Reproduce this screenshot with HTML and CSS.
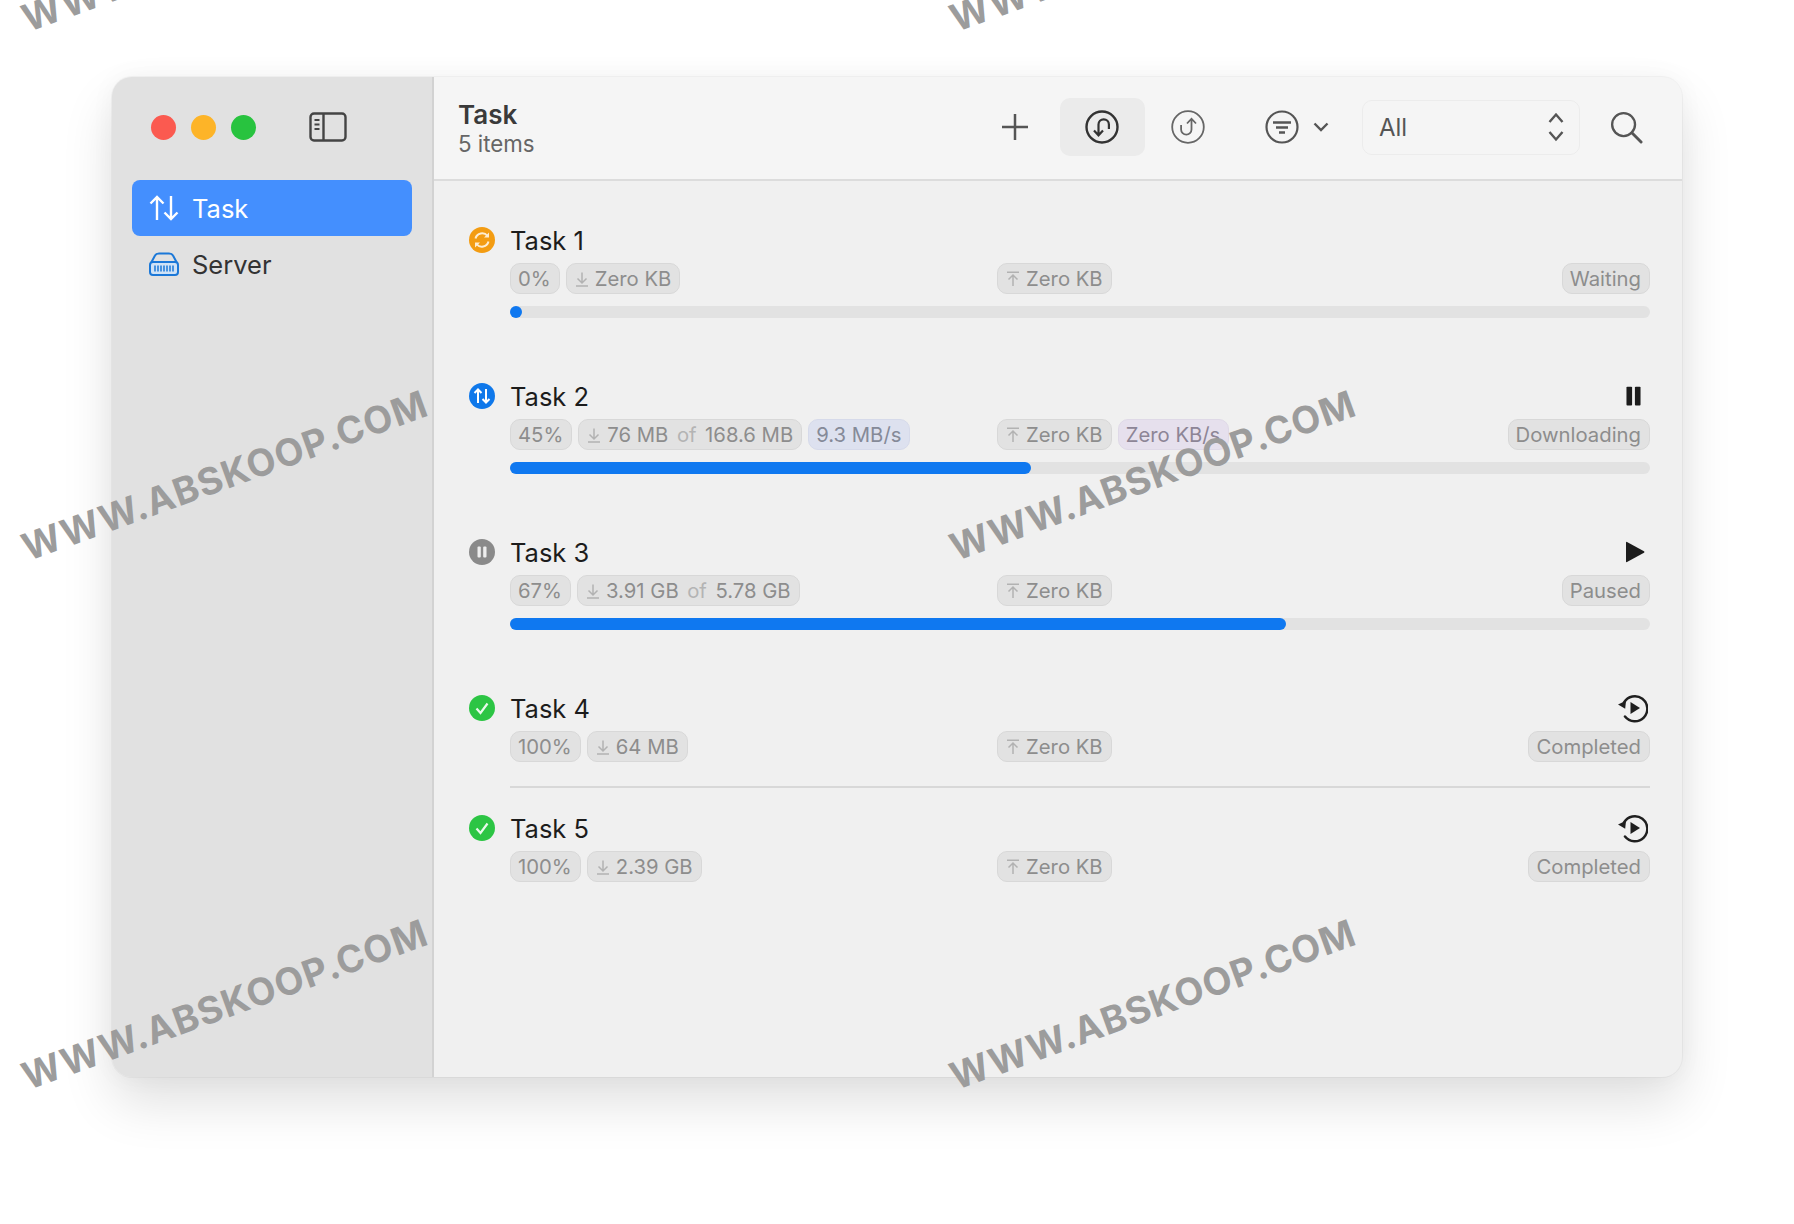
FILE: index.html
```html
<!DOCTYPE html>
<html lang="en">
<head>
<meta charset="utf-8">
<title>Task</title>
<link rel="stylesheet" href="styles.css">
</head>
<body>
<svg class="defs" width="0" height="0" aria-hidden="true">
  <symbol id="dl" viewBox="0 0 14 16"><path d="M7 1.500V12M2.500 7.500 7 12l4.500-4.500M1 15h12" fill="none" stroke="currentColor" stroke-width="1.500"/></symbol>
  <symbol id="ul" viewBox="0 0 14 16"><path d="M7 15V4.500M2.500 8.500 7 4l4.500 4.500M1 1.200h12" fill="none" stroke="currentColor" stroke-width="1.500"/></symbol>
  <symbol id="check" viewBox="0 0 26 26"><circle cx="13" cy="13" r="13" fill="#2cc544"/><path d="M7.500 13.500l4 4.500 7-9.500" fill="none" stroke="#e9f9ec" stroke-width="2.200"/></symbol>
  <symbol id="replay" viewBox="0 0 30 30"><path d="M6 9.500A12.500 12.500 0 1 1 7 23.500" fill="none" stroke="#1f1f1f" stroke-width="2.500" stroke-linecap="round"/><path d="M0 11.500l8-3.800-.8 8z" fill="#1f1f1f"/><path d="M12.500 9l9.500 6-9.500 6z" fill="#1f1f1f"/></symbol>
</svg>
<main class="page">
  <div class="window">
    <aside class="sidebar">
      <div class="titlebar">
        <span class="light red"></span><span class="light yellow"></span><span class="light green"></span>
        <svg class="toggle" viewBox="0 0 38 30"><rect x="1.500" y="1.500" width="35" height="27" rx="3.500" fill="none" stroke="#444" stroke-width="2.400"/><path d="M14.500 2v26" stroke="#444" stroke-width="2.400"/><path d="M5.500 8h5M5.500 12.500h5M5.500 17h5" stroke="#444" stroke-width="2"/></svg>
      </div>
      <nav class="nav">
        <div class="nav-item active">
          <svg class="nav-icon" viewBox="0 0 30 26"><path d="M8 25V2M1.500 8.500 8 2l6.500 6.500M22 1v23M15.500 17.500 22 24l6.500-6.500" fill="none" stroke="#fff" stroke-width="2.400"/></svg>
          <span>Task</span>
        </div>
        <div class="nav-item">
          <svg class="nav-icon" viewBox="0 0 30 24"><path d="M2 11 6 3.500Q7 1.500 10 1.500h10q3 0 4 2l4 7.500" fill="none" stroke="#1b78d8" stroke-width="2"/><rect x="1" y="10" width="28" height="13" rx="3" fill="#cfe2f6" stroke="#1b78d8" stroke-width="2"/><path d="M6 13.500v6M9 13.500v6M12 13.500v6M15 13.500v6M18 13.500v6M21 13.500v6M24 13.500v6" stroke="#1b78d8" stroke-width="1.500"/></svg>
          <span>Server</span>
        </div>
      </nav>
    </aside>
    <section class="main">
      <header class="toolbar">
        <div class="heading">
          <div class="heading-title">Task</div>
          <div class="heading-sub">5 items</div>
        </div>
        <div class="tool">
          <svg class="ic-plus" viewBox="0 0 28 28"><path d="M14 1v26M1 14h26" stroke="#555" stroke-width="2.500"/></svg>
        </div>
        <div class="tool tool-on">
          <svg class="ic-circle ic-on" viewBox="0 0 34 34"><circle cx="17" cy="17" r="15.500" fill="none" stroke="#333" stroke-width="2.400"/><path d="M13.500 25V14.500a5.200 5.200 0 0 1 10.400 0V19M9 20.500l4.500 4.800 4.500-4.800" fill="none" stroke="#333" stroke-width="2.200"/></svg>
        </div>
        <div class="tool">
          <svg class="ic-circle" viewBox="0 0 34 34"><circle cx="17" cy="17" r="15.800" fill="none" stroke="#666" stroke-width="1.800"/><path d="M20.500 9v10.500a5.200 5.200 0 0 1-10.400 0V15M16 13.500 20.500 8.700 25 13.500" fill="none" stroke="#666" stroke-width="1.800"/></svg>
        </div>
        <div class="filter">
          <svg class="ic-circle" viewBox="0 0 34 34"><circle cx="17" cy="17" r="15.500" fill="none" stroke="#555" stroke-width="2.200"/><path d="M8 12.500h18M11 17.500h12M14 22.500h6" stroke="#555" stroke-width="2.400"/></svg>
          <svg class="ic-chev" viewBox="0 0 16 10"><path d="M1.500 1.500 8 8l6.500-6.500" fill="none" stroke="#555" stroke-width="2.400"/></svg>
        </div>
        <div class="select">
          <span>All</span>
          <svg class="ic-updown" viewBox="0 0 18 30"><path d="M2.500 10 9 2.500l6.500 7.500M2.500 20 9 27.500l6.500-7.500" fill="none" stroke="#555" stroke-width="2.400"/></svg>
        </div>
        <div class="search">
          <svg class="ic-search" viewBox="0 0 34 34"><circle cx="14" cy="14" r="11.800" fill="none" stroke="#555" stroke-width="2.400"/><path d="M22.500 22.500 32 32" stroke="#555" stroke-width="3" stroke-linecap="round"/></svg>
        </div>
      </header>
      <div class="list">

        <article class="task">
          <svg class="status" viewBox="0 0 26 26"><circle cx="13" cy="13" r="13" fill="#f39c12"/><path d="M6.500 11.500A6.800 6.800 0 0 1 18.500 9M19.500 14.500A6.800 6.800 0 0 1 7.500 17" fill="none" stroke="#fdecd0" stroke-width="2"/><path d="M20 5.500v5h-5zM6 20.500v-5h5z" fill="#fdecd0"/></svg>
          <div class="body">
            <div class="name-line"><span class="name">Task 1</span></div>
            <div class="chips">
              <div class="left">
                <span class="chip">0%</span>
                <span class="chip"><svg class="arr"><use href="#dl"/></svg>Zero KB</span>
              </div>
              <div class="mid">
                <span class="chip"><svg class="arr"><use href="#ul"/></svg>Zero KB</span>
              </div>
              <span class="chip">Waiting</span>
            </div>
            <div class="bar"><div class="fill" style="width:12px"></div></div>
          </div>
        </article>

        <article class="task">
          <svg class="status" viewBox="0 0 26 26"><circle cx="13" cy="13" r="13" fill="#0f78ea"/><path d="M9 20V6.500M5.500 10 9 6.500l3.500 3.500M17 6v13.500M13.500 16l3.500 3.500 3.500-3.500" fill="none" stroke="#fff" stroke-width="2"/></svg>
          <div class="body">
            <div class="name-line">
              <span class="name">Task 2</span>
              <svg class="act act-pause" viewBox="0 0 16 20"><rect x="0.500" y="0" width="6" height="20" rx="1" fill="#1c1c1c"/><rect x="9.500" y="0" width="6" height="20" rx="1" fill="#1c1c1c"/></svg>
            </div>
            <div class="chips">
              <div class="left">
                <span class="chip">45%</span>
                <span class="chip"><svg class="arr"><use href="#dl"/></svg>76 MB<em>of</em>168.6 MB</span>
                <span class="chip chip-down">9.3 MB/s</span>
              </div>
              <div class="mid">
                <span class="chip"><svg class="arr"><use href="#ul"/></svg>Zero KB</span>
                <span class="chip chip-up">Zero KB/s</span>
              </div>
              <span class="chip">Downloading</span>
            </div>
            <div class="bar"><div class="fill" style="width:521px"></div></div>
          </div>
        </article>

        <article class="task">
          <svg class="status" viewBox="0 0 26 26"><circle cx="13" cy="13" r="13" fill="#8a8a8a"/><rect x="8.500" y="7.500" width="3.300" height="11" rx="1" fill="#eee"/><rect x="14.200" y="7.500" width="3.300" height="11" rx="1" fill="#eee"/></svg>
          <div class="body">
            <div class="name-line">
              <span class="name">Task 3</span>
              <svg class="act act-play" viewBox="0 0 20 22"><path d="M1 1.500v19q0 1 1 .5l17-9.300q1-.7 0-1.400L2 1q-1-.5-1 .5z" fill="#1c1c1c"/></svg>
            </div>
            <div class="chips">
              <div class="left">
                <span class="chip">67%</span>
                <span class="chip"><svg class="arr"><use href="#dl"/></svg>3.91 GB<em>of</em>5.78 GB</span>
              </div>
              <div class="mid">
                <span class="chip"><svg class="arr"><use href="#ul"/></svg>Zero KB</span>
              </div>
              <span class="chip">Paused</span>
            </div>
            <div class="bar"><div class="fill" style="width:776px"></div></div>
          </div>
        </article>

        <article class="task task-done">
          <svg class="status"><use href="#check"/></svg>
          <div class="body">
            <div class="name-line">
              <span class="name">Task 4</span>
              <svg class="act act-replay"><use href="#replay"/></svg>
            </div>
            <div class="chips">
              <div class="left">
                <span class="chip">100%</span>
                <span class="chip"><svg class="arr"><use href="#dl"/></svg>64 MB</span>
              </div>
              <div class="mid">
                <span class="chip"><svg class="arr"><use href="#ul"/></svg>Zero KB</span>
              </div>
              <span class="chip">Completed</span>
            </div>
          </div>
        </article>

        <div class="sep"></div>

        <article class="task task-done">
          <svg class="status"><use href="#check"/></svg>
          <div class="body">
            <div class="name-line">
              <span class="name">Task 5</span>
              <svg class="act act-replay"><use href="#replay"/></svg>
            </div>
            <div class="chips">
              <div class="left">
                <span class="chip">100%</span>
                <span class="chip"><svg class="arr"><use href="#dl"/></svg>2.39 GB</span>
              </div>
              <div class="mid">
                <span class="chip"><svg class="arr"><use href="#ul"/></svg>Zero KB</span>
              </div>
              <span class="chip">Completed</span>
            </div>
          </div>
        </article>
      </div>
    </section>
  </div>
</main>
<div class="wm wm-a1">WWW.ABSKOOP.COM</div>
<div class="wm wm-b1">WWW.ABSKOOP.COM</div>
<div class="wm wm-a2">WWW.ABSKOOP.COM</div>
<div class="wm wm-b2">WWW.ABSKOOP.COM</div>
<div class="wm wm-a3">WWW.ABSKOOP.COM</div>
<div class="wm wm-b3">WWW.ABSKOOP.COM</div>
</body>
</html>
```

FILE: styles.css
```css
* { box-sizing: border-box; }
html, body { margin: 0; padding: 0; height: 100%; background: #fff; overflow: hidden; }
body { font-family: Inter, "Liberation Sans", sans-serif; position: relative; }
.defs { position: absolute; }

.page { padding: 77px 0 0 112px; }
.window {
  display: flex;
  width: 1570px;
  height: 1000px;
  border-radius: 20px;
  overflow: hidden;
  background: #f0f0f0;
  box-shadow: 0 26px 52px rgba(0,0,0,.12), 0 0 26px rgba(0,0,0,.04), 0 0 0 1px rgba(0,0,0,.035);
}

.sidebar {
  width: 322px;
  flex: none;
  background: #e1e1e1;
  border-right: 2px solid #d2d2d2;
  padding: 0 20px;
}
.titlebar { display: flex; align-items: center; height: 100px; padding: 0 0 0 19px; }
.light { width: 25px; height: 25px; border-radius: 50%; margin-right: 15px; }
.red { background: #fb5a50; }
.yellow { background: #fdb428; }
.green { background: #28c33f; }
.toggle { width: 40px; height: 30px; margin-left: 37px; }

.nav { margin-top: 3px; }
.nav-item {
  display: flex;
  align-items: center;
  gap: 13px;
  height: 56px;
  padding: 0 0 0 17px;
  border-radius: 8px;
  font-size: 25.500px;
  color: #333;
}
.nav-item.active { background: #448ffe; color: #fff; }
.nav-icon { width: 30px; height: 26px; flex: none; }

.main { flex: 1; min-width: 0; display: flex; flex-direction: column; }

.toolbar {
  display: flex;
  align-items: center;
  height: 104px;
  padding: 0 32px 2px 24px;
  background: #f5f5f5;
  border-bottom: 2px solid #dcdcdc;
}
.heading { flex: 1; margin-top: 3px; }
.heading-title { font-size: 26px; font-weight: 600; color: #3a3a3a; line-height: 31px; }
.heading-sub { font-size: 22.300px; color: #666; line-height: 28px; }

.tool {
  width: 85px;
  height: 58px;
  display: flex;
  align-items: center;
  justify-content: center;
  border-radius: 10px;
}
.tool-on { background: #ebebeb; }
.ic-plus { width: 28px; height: 28px; margin-right: 6px; }
.ic-circle { width: 34px; height: 34px; flex: none; }
.ic-on { margin-right: 2px; }
.filter { display: flex; align-items: center; gap: 14px; margin: 0 28px 0 35px; width: 69px; }
.ic-chev { width: 16px; height: 10px; flex: none; }

.select {
  display: flex;
  align-items: center;
  justify-content: space-between;
  width: 218px;
  height: 55px;
  padding: 0 14px 0 16px;
  border: 1.500px solid #ececec;
  border-radius: 10px;
  font-size: 24px;
  color: #555;
}
.ic-updown { width: 18px; height: 30px; }
.search { width: 46px; margin-left: 24px; display: flex; justify-content: center; padding-right: 2px; }
.ic-search { width: 33px; height: 33px; }

.list { padding: 44px 32px 0 35px; }
.task { display: flex; gap: 15px; margin-bottom: 63px; }
.task-done { margin-bottom: 0; }
.status { width: 26px; height: 26px; flex: none; margin-top: 2px; }
.body { flex: 1; min-width: 0; }
.name-line { display: flex; align-items: center; justify-content: space-between; height: 30px; margin-bottom: 8px; }
.name { font-size: 25.500px; color: #1c1c1c; }
.act { flex: none; }
.act-pause { width: 15px; height: 20px; margin-right: 9px; }
.act-play { width: 20px; height: 22px; margin-right: 5px; }
.act-replay { width: 30px; height: 30px; margin-right: 2px; }

.chips { display: flex; align-items: center; height: 31px; }
.left { display: flex; gap: 6px; width: 487px; flex: none; }
.mid { display: flex; gap: 6px; flex: 1; }
.chip {
  display: inline-flex;
  align-items: center;
  height: 31px;
  padding: 0 8px 0 7px;
  border: 1px solid #d8d8d8;
  border-radius: 10px;
  background: #e2e2e2;
  color: #8d8d8d;
  font-size: 20.300px;
  white-space: pre;
}
.chip em { font-style: normal; color: #b4b4b4; margin: 0 8.500px; }
.chip-down { background: #dde1ef; border-color: #d6daea; color: #858a98; }
.chip-up { background: #e6e0ed; border-color: #dfd9e7; color: #8d8596; }
.arr { width: 14px; height: 16px; margin: 0 6px 0 1px; color: #b2b2b2; flex: none; }

.bar { height: 12px; margin-top: 12px; border-radius: 6px; background: #e2e2e2; }
.fill { height: 100%; border-radius: 6px; background: #0f78f0; }

.sep { height: 2px; margin: 24px 0 25px 41px; background: #d8d8d8; }

.wm {
  position: absolute;
  font-family: Inter, sans-serif;
  font-weight: 700;
  font-size: 37.500px;
  letter-spacing: 1px;
  color: #9c9c9c;
  line-height: 1;
  white-space: nowrap;
  transform: rotate(-20deg);
  transform-origin: 0 100%;
}
.wm-a1 { left: 30px; top: 0; }
.wm-b1 { left: 958px; top: 0; }
.wm-a2 { left: 30px; top: 529px; }
.wm-b2 { left: 958px; top: 529px; }
.wm-a3 { left: 30px; top: 1058px; }
.wm-b3 { left: 958px; top: 1058px; }
```
